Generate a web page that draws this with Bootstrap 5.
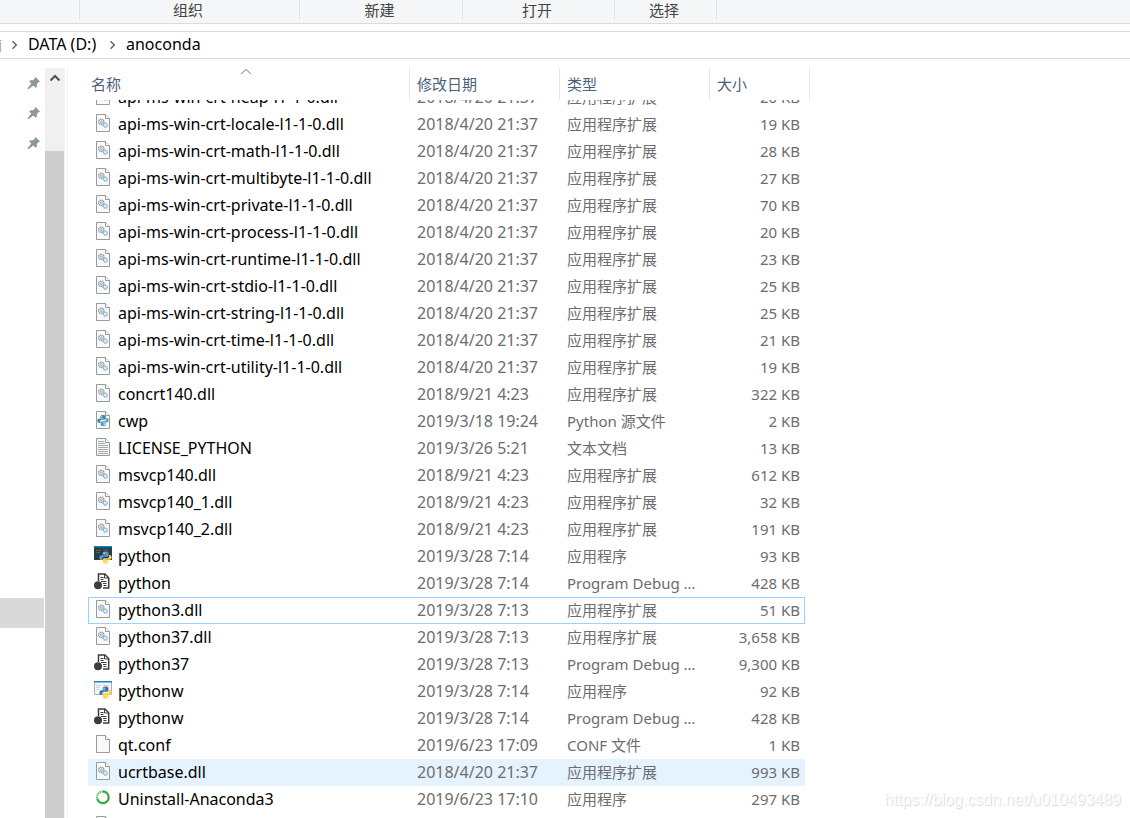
<!DOCTYPE html>
<html lang="zh-CN">
<head>
<meta charset="utf-8">
<meta name="viewport" content="width=device-width, initial-scale=1">
<title>anoconda</title>
<link href="https://cdn.jsdelivr.net/npm/bootstrap@5.3.0/dist/css/bootstrap.min.css" rel="stylesheet">
<style>
  body { font: 15px/27px "Noto Sans", "Noto Sans CJK SC", sans-serif; color: #000; background: #fff; }
  .ribbon { height: 24px; background: #f5f6f7; border-bottom: 1px solid #dadbdc; color: #444; line-height: 20px; }
  .ribbon-group { height: 20px; border-right: 1px solid #e2e3e4; text-align: center; }
  .g-clip { width: 80px; } .g-org { width: 220px; } .g-new { width: 163px; }
  .g-open { width: 152px; } .g-select { width: 102px; }
  .g-org, .g-new, .g-open, .g-select { padding-right: 3px; }
  .address { height: 28px; margin-top: 7px; border: solid #d9d9d9; border-width: 1px 0; font-size: 16px; line-height: 24px; }
  .address a { color: #000; text-decoration: none; white-space: nowrap; height: 26px; }
  .address .crumb-cut { width: 2px; overflow: hidden; color: #999; font-size: 15px; }
  .crumb-drive { width: 72px; }
  .crumb-sep { width: 26px; }
  .panes { margin-top: 9px; min-height: 0; }
  .nav-pane { width: 45px; }
  .nav-item-row { height: 30px; width: 44px; padding-right: 3px; }
  .nav-current { margin-top: 440px; background: #d9d9d9; }
  .scroll-track { width: 20px; background: #f0f0f0; padding-right: 1px; }
  .scroll-up { height: 83px; padding: 4px 0 0; border: 0; background: none; align-items: flex-start; }
  .scroll-thumb { background: #cdcdcd; }
  .splitter { width: 3px; border-right: 1px solid #f2f2f2; }
  .files { padding-left: 20px; overflow: hidden; }
  .file-table { table-layout: fixed; width: 722px; border-collapse: separate; border-spacing: 0; }
  .file-table th { position: sticky; top: 0; z-index: 1; height: 32px; padding: 0; background: #fff; border-right: 1px solid #e5e5e5; font-weight: 400; }
  .file-table th button { border: 0; background: none; color: #4c607a; padding: 1px 0 0 7px; width: 100%; height: 32px; text-align: left; display: block; }
  .file-table th:first-child button { padding-left: 3px; }
  .sort-mark { position: absolute; top: 0; left: 152px; }
  .file-table td { height: 27px; padding: 0 0 0 7px; color: #6d6d6d; white-space: nowrap; overflow: hidden; text-overflow: ellipsis; }
  .file-table td:nth-child(1) { color: #000; font-size: 16px; }
  .file-table td:nth-child(2) { font-size: 16px; }
  .file-table td:nth-child(3) { padding-right: 8px; }
  .file-table td:nth-child(4) { text-align: right; padding: 0 5px 0 0; }
  .file-table td svg { width: 18px; height: 18px; margin: 0 6px 6px -1px; }
  .row-focus td:not(:last-child) { box-shadow: inset 0 1px #99d1ff, inset 0 -1px #99d1ff; }
  .row-focus td:first-child { box-shadow: inset 0 1px #99d1ff, inset 0 -1px #99d1ff, inset 1px 0 #99d1ff; }
  .row-focus td:nth-child(4) { box-shadow: inset 0 1px #99d1ff, inset 0 -1px #99d1ff, inset -1px 0 #99d1ff; }
  .row-hover td:not(:last-child) { background: #e5f3ff; }
  .watermark { position: absolute; right: 9px; bottom: 8px; font: 16px/20px "Liberation Sans", sans-serif; color: #fcfcfc; text-shadow: 1px 1px 1px #d8d8d8; }
</style>
</head>
<body class="vh-100 overflow-hidden d-flex flex-column position-relative">

<svg width="0" height="0" class="position-absolute" aria-hidden="true">
  <defs>
    <symbol id="i-page" viewBox="0 0 18 18">
      <path d="M2.5.5h9l4 4v13h-13z" fill="#f8f9f9" stroke="#969b9b"/>
      <path d="M11.5.5v4h4" fill="#fff" stroke="#969b9b"/>
    </symbol>
    <symbol id="i-dll" viewBox="0 0 18 18">
      <use href="#i-page"/>
      <circle cx="7.3" cy="7.8" r="2.7" fill="#eee" stroke="#8d989e" stroke-width="1.3" stroke-dasharray="1.3 .5"/>
      <circle cx="7.3" cy="7.8" r="1" fill="none" stroke="#8d989e" stroke-width=".7"/>
      <circle cx="11.3" cy="11.2" r="2" fill="#e2f0fa" stroke="#73a9cf" stroke-width="1.2" stroke-dasharray="1.2 .4"/>
    </symbol>
    <symbol id="i-py" viewBox="0 0 16 16">
      <path d="M8 .5c-3 0-3.500 1-3.500 2.300V4.500H8.300v.7H3C1.200 5.200.5 6.500.5 8.200s.8 3 2.300 3h1.400V9.300c0-1.300 1-2.200 2.300-2.200h3.300c1.100 0 1.900-.8 1.900-1.900V2.800C11.700 1.300 10.500.5 8 .5z" fill="var(--a)"/>
      <path d="M8 15.500c3 0 3.500-1 3.500-2.300v-1.700H7.700v-.7H13c1.800 0 2.500-1.300 2.500-3s-.8-3-2.300-3h-.9v1.900c0 1.300-1 2.200-2.300 2.200H6.700c-1.100 0-1.900.8-1.900 1.900v2.400c0 1.500.7 2.300 3.200 2.300z" fill="var(--b)"/>
      <circle cx="6.300" cy="2.700" r=".8" fill="#fff"/><circle cx="9.700" cy="13.300" r=".8" fill="#fff"/>
    </symbol>
    <symbol id="i-pysrc" viewBox="0 0 18 18">
      <use href="#i-page"/>
      <g style="--a:#3d86ad;--b:#4b9fc0"><use href="#i-py" x="3" y="3.500" width="12" height="12"/></g>
    </symbol>
    <symbol id="i-txt" viewBox="0 0 18 18">
      <use href="#i-page"/>
      <path d="M4 3.500h6M4 5.500h7M4 7.500h10M4 9.500h10M4 11.500h10M4 13.500h10M4 15.500h10" stroke="#a3a7a7"/>
    </symbol>
    <symbol id="i-exe" viewBox="0 0 18 18">
      <path d="M0 0h18v14H0z" fill="#2e3b40"/><path d="M0 0h18v1.500H0z" fill="#1479bd"/>
      <path d="M2 4.500h5M2 6.500h4M9 4h6" stroke="#3f7147"/>
      <g style="--a:#4f9bd6;--b:#ffd84d"><use href="#i-py" x="5" y="5" width="13" height="13"/></g>
    </symbol>
    <symbol id="i-exew" viewBox="0 0 18 18">
      <path d="M.5.5h17v13H.5z" fill="#f4f5f6" stroke="#a9b0b5"/><path d="M0 0h18v1.500H0z" fill="#1982d1"/>
      <path d="M2 4.500h5M2 6.500h4M2 8.500h3M9 4.500h6" stroke="#ccd2d6"/>
      <g style="--a:#3776ab;--b:#ffd43b"><use href="#i-py" x="5" y="5" width="13" height="13"/></g>
    </symbol>
    <symbol id="i-pdb" viewBox="0 0 18 18">
      <path d="M4.500 8V1H11l3.700 3.700V15H9" fill="#fff" stroke="#3c3c3c" stroke-width="1.500"/>
      <path d="M10.500 1v4h4" fill="none" stroke="#3c3c3c"/>
      <path d="M6.500 4.500h3M6.500 6.500h3M7 8.500h5.500M9 10.500h3.500M9.500 12.500h3" stroke="#3c3c3c"/>
      <circle cx="4" cy="12.200" r="4" fill="#3c3c3c"/>
    </symbol>
    <symbol id="i-ring" viewBox="0 0 18 18">
      <path d="M9 2.500a5.800 5.800 0 1 1-5.800 7" fill="none" stroke="#3bab4a" stroke-width="2.300"/>
      <path d="M3 9A5.800 5.800 0 0 1 9 2.500" fill="none" stroke="#5bb966" stroke-width="2" stroke-dasharray="1.500 .7"/>
    </symbol>
    <symbol id="i-pin" viewBox="0 0 14 14">
      <path d="M8.300.8l4.900 4.900-1.500.4-1.900 1.900.1 2.700-1.300 1.100-2.300-2.300-4.600 3.600-.9-.2L.6 12.300l3.700-4.700L2.200 5.500l1.200-1.300 2.600.1L8 2.300z" fill="#8b989f"/>
    </symbol>
    <symbol id="i-next" viewBox="0 0 8 10">
      <path d="M1.500 1.200L5.300 5 1.500 8.800" fill="none" stroke="#666" stroke-width="1.500"/>
    </symbol>
  </defs>
</svg>

<header class="ribbon d-flex flex-shrink-0">
  <div class="ribbon-group g-clip"></div>
  <div class="ribbon-group g-org">组织</div>
  <div class="ribbon-group g-new">新建</div>
  <div class="ribbon-group g-open">打开</div>
  <div class="ribbon-group g-select">选择</div>
</header>

<nav class="address d-flex flex-shrink-0 align-items-center" aria-label="地址">
  <a href="#" class="crumb-cut d-flex justify-content-end">此电脑</a>
  <span class="crumb-sep d-flex justify-content-center"><svg width="8" height="10"><use href="#i-next"/></svg></span>
  <a href="#" class="crumb-drive">DATA (D:)</a>
  <span class="crumb-sep d-flex justify-content-center"><svg width="8" height="10"><use href="#i-next"/></svg></span>
  <a href="#">anoconda</a>
</nav>

<main class="panes d-flex flex-grow-1">
  <aside class="nav-pane flex-shrink-0">
    <div class="nav-item-row d-flex align-items-center justify-content-end"><svg width="14" height="14"><use href="#i-pin"/></svg></div>
    <div class="nav-item-row d-flex align-items-center justify-content-end"><svg width="14" height="14"><use href="#i-pin"/></svg></div>
    <div class="nav-item-row d-flex align-items-center justify-content-end"><svg width="14" height="14"><use href="#i-pin"/></svg></div>
    <div class="nav-item-row nav-current"></div>
  </aside>
  <div class="scroll-track d-flex flex-column flex-shrink-0">
    <button type="button" class="scroll-up d-flex justify-content-center flex-shrink-0" aria-label="向上滚动"><svg width="12" height="12"><path d="M1.500 8.500L6 4l4.500 4.500" fill="none" stroke="#505050" stroke-width="2"/></svg></button>
    <div class="scroll-thumb flex-grow-1"></div>
  </div>
  <div class="splitter flex-shrink-0"></div>
  <section class="files flex-grow-1" id="files">
    <table class="file-table">
      <colgroup><col style="width:322px"><col style="width:150px"><col style="width:150px"><col style="width:95px"><col style="width:5px"></colgroup>
      <thead>
        <tr>
          <th><button type="button">名称<svg class="sort-mark" width="12" height="8"><path d="M1 6l5-4.500L11 6" fill="none" stroke="#777"/></svg></button></th>
          <th><button type="button">修改日期</button></th>
          <th><button type="button">类型</button></th>
          <th colspan="2"><button type="button">大小</button></th>
        </tr>
      </thead>
      <tbody id="rows"></tbody>
    </table>
  </section>
</main>
<div class="watermark">https://blog.csdn.net/u010493489</div>

<script src="https://cdn.jsdelivr.net/npm/bootstrap@5.3.0/dist/js/bootstrap.bundle.min.js"></script>
<script>
  const dll = '应用程序扩展', exe = '应用程序', pdb = 'Program Debug Database';
  const april = '2018/4/20 21:37';
  // icon, name, modified, type, size, row class
  const files = [
    ['dll', 'api-ms-win-crt-heap-l1-1-0.dll', april, dll, '20 KB'],
    ['dll', 'api-ms-win-crt-locale-l1-1-0.dll', april, dll, '19 KB'],
    ['dll', 'api-ms-win-crt-math-l1-1-0.dll', april, dll, '28 KB'],
    ['dll', 'api-ms-win-crt-multibyte-l1-1-0.dll', april, dll, '27 KB'],
    ['dll', 'api-ms-win-crt-private-l1-1-0.dll', april, dll, '70 KB'],
    ['dll', 'api-ms-win-crt-process-l1-1-0.dll', april, dll, '20 KB'],
    ['dll', 'api-ms-win-crt-runtime-l1-1-0.dll', april, dll, '23 KB'],
    ['dll', 'api-ms-win-crt-stdio-l1-1-0.dll', april, dll, '25 KB'],
    ['dll', 'api-ms-win-crt-string-l1-1-0.dll', april, dll, '25 KB'],
    ['dll', 'api-ms-win-crt-time-l1-1-0.dll', april, dll, '21 KB'],
    ['dll', 'api-ms-win-crt-utility-l1-1-0.dll', april, dll, '19 KB'],
    ['dll', 'concrt140.dll', '2018/9/21 4:23', dll, '322 KB'],
    ['pysrc', 'cwp', '2019/3/18 19:24', 'Python 源文件', '2 KB'],
    ['txt', 'LICENSE_PYTHON', '2019/3/26 5:21', '文本文档', '13 KB'],
    ['dll', 'msvcp140.dll', '2018/9/21 4:23', dll, '612 KB'],
    ['dll', 'msvcp140_1.dll', '2018/9/21 4:23', dll, '32 KB'],
    ['dll', 'msvcp140_2.dll', '2018/9/21 4:23', dll, '191 KB'],
    ['exe', 'python', '2019/3/28 7:14', exe, '93 KB'],
    ['pdb', 'python', '2019/3/28 7:14', pdb, '428 KB'],
    ['dll', 'python3.dll', '2019/3/28 7:13', dll, '51 KB', 'row-focus'],
    ['dll', 'python37.dll', '2019/3/28 7:13', dll, '3,658 KB'],
    ['pdb', 'python37', '2019/3/28 7:13', pdb, '9,300 KB'],
    ['exew', 'pythonw', '2019/3/28 7:14', exe, '92 KB'],
    ['pdb', 'pythonw', '2019/3/28 7:14', pdb, '428 KB'],
    ['page', 'qt.conf', '2019/6/23 17:09', 'CONF 文件', '1 KB'],
    ['dll', 'ucrtbase.dll', april, dll, '993 KB', 'row-hover'],
    ['ring', 'Uninstall-Anaconda3', '2019/6/23 17:10', exe, '297 KB'],
    ['dll', 'vccorlib140.dll', '2018/9/21 4:23', dll, '380 KB']
  ];
  document.getElementById('rows').innerHTML = files.map(([icon, name, date, type, size, cls = '']) =>
    `<tr class="${cls}"><td><svg aria-hidden="true"><use href="#i-${icon}"/></svg>${name}</td><td>${date}</td><td>${type}</td><td>${size}</td><td></td></tr>`).join('');
  document.getElementById('files').scrollTop = 16;
</script>
</body>
</html>
